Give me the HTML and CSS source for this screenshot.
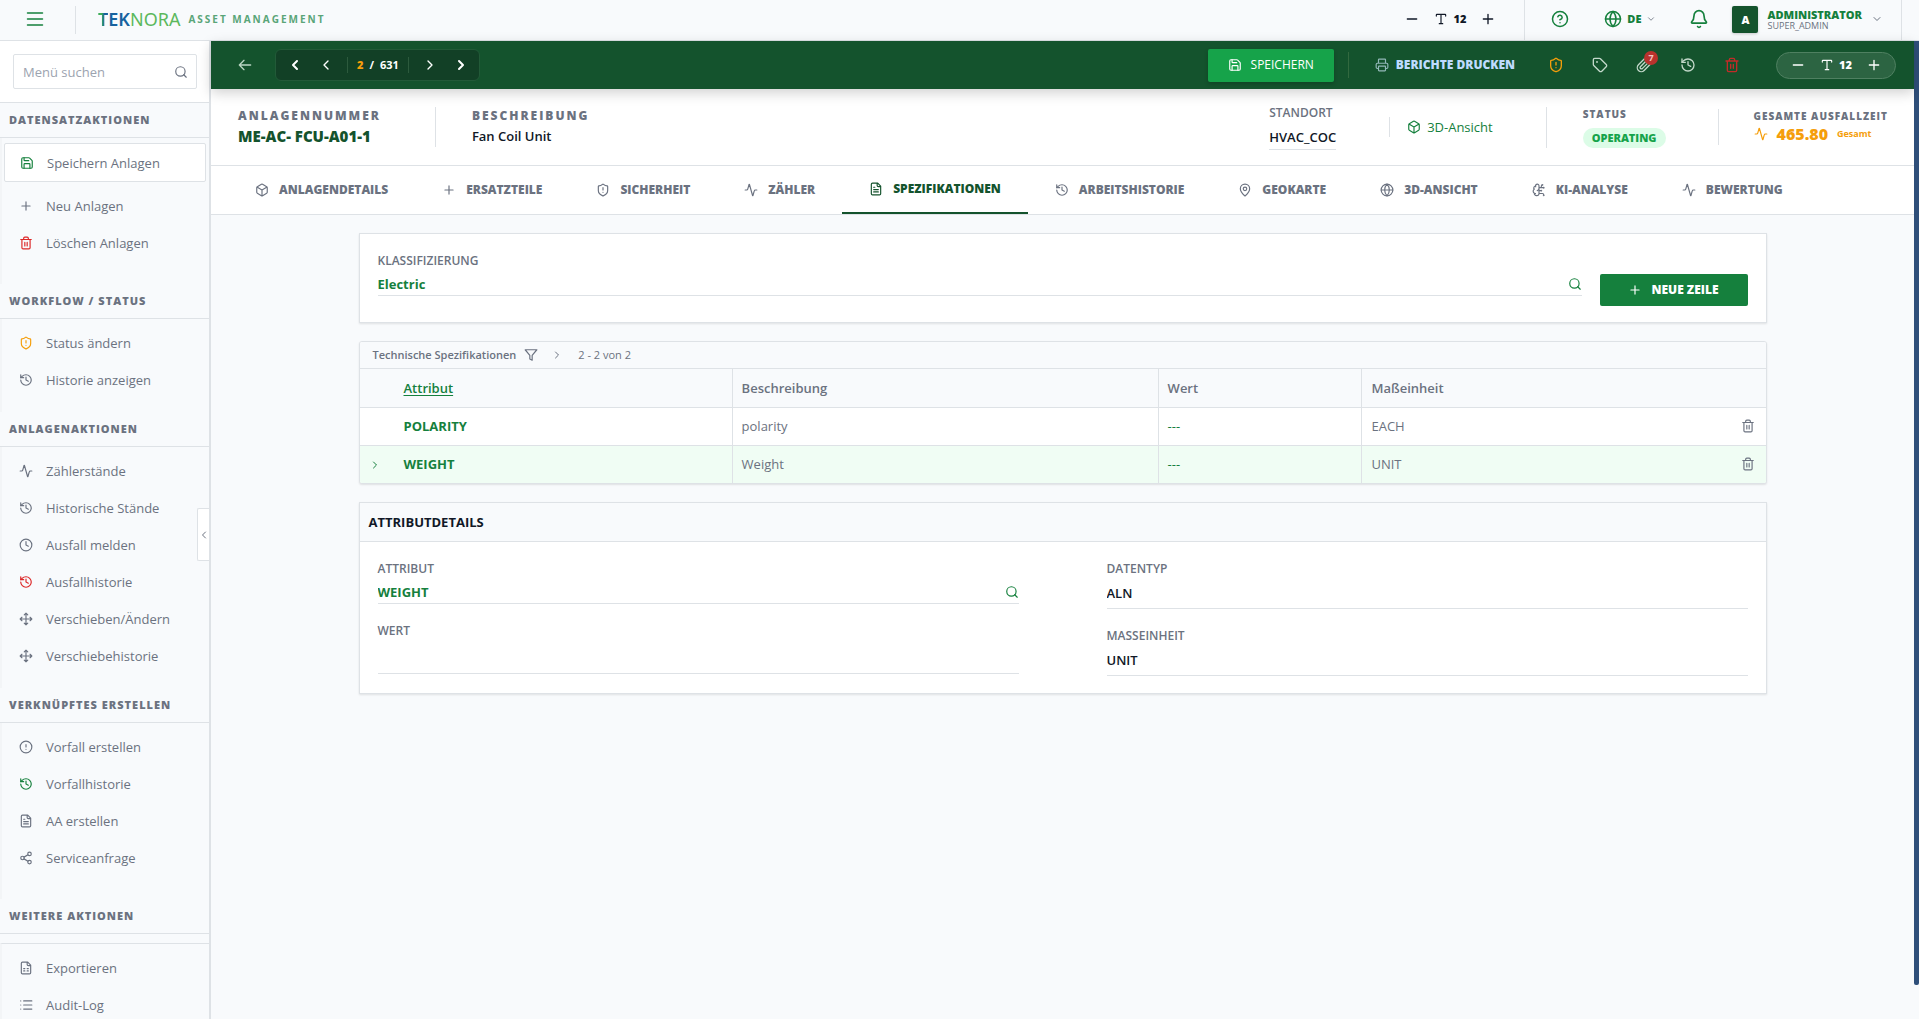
FILE: index.html
```html
<!DOCTYPE html>
<html lang="de">
<head>
<meta charset="utf-8">
<meta name="viewport" content="width=device-width, initial-scale=1">
<title>Teknora Asset Management</title>
<link rel="stylesheet" href="styles.css">
</head>
<body>
<svg class="sprite" aria-hidden="true">
  <symbol id="menu" viewBox="0 0 24 24"><path d="M2 4h20M2 12h20M2 20h20"/></symbol>
  <symbol id="minus" viewBox="0 0 24 24"><path d="M5 12h14"/></symbol>
  <symbol id="plus" viewBox="0 0 24 24"><path d="M5 12h14M12 5v14"/></symbol>
  <symbol id="type" viewBox="0 0 24 24"><path d="M12 4v16M4 7V5a1 1 0 0 1 1-1h14a1 1 0 0 1 1 1v2M9 20h6"/></symbol>
  <symbol id="help" viewBox="0 0 24 24"><circle cx="12" cy="12" r="10"/><path d="M9.1 9a3 3 0 0 1 5.8 1c0 2-3 3-3 3M12 17h.01"/></symbol>
  <symbol id="globe" viewBox="0 0 24 24"><circle cx="12" cy="12" r="10"/><path d="M12 2a14.5 14.5 0 0 0 0 20 14.5 14.5 0 0 0 0-20M2 12h20"/></symbol>
  <symbol id="bell" viewBox="0 0 24 24"><path d="M10.3 21a1.9 1.9 0 0 0 3.4 0M3.3 15.3A1 1 0 0 0 4 17h16a1 1 0 0 0 .7-1.7C19.4 14 18 12.500 18 8A6 6 0 0 0 6 8c0 4.500-1.400 6-2.700 7.300"/></symbol>
  <symbol id="down" viewBox="0 0 24 24"><path d="m6 9 6 6 6-6"/></symbol>
  <symbol id="left" viewBox="0 0 24 24"><path d="m15 18-6-6 6-6"/></symbol>
  <symbol id="right" viewBox="0 0 24 24"><path d="m9 18 6-6-6-6"/></symbol>
  <symbol id="back" viewBox="0 0 24 24"><path d="m12 19-7-7 7-7M22 12H5"/></symbol>
  <symbol id="search" viewBox="0 0 24 24"><circle cx="11" cy="11" r="8"/><path d="m21 21-4.300-4.300"/></symbol>
  <symbol id="save" viewBox="0 0 24 24"><path d="M15.200 3a2 2 0 0 1 1.400.6l3.800 3.800a2 2 0 0 1 .6 1.400V19a2 2 0 0 1-2 2H5a2 2 0 0 1-2-2V5a2 2 0 0 1 2-2z"/><path d="M17 21v-7a1 1 0 0 0-1-1H8a1 1 0 0 0-1 1v7M7 3v4a1 1 0 0 0 1 1h7"/></symbol>
  <symbol id="trash" viewBox="0 0 24 24"><path d="M3 6h18M19 6v14a2 2 0 0 1-2 2H7a2 2 0 0 1-2-2V6M8 6V4a2 2 0 0 1 2-2h4a2 2 0 0 1 2 2v2M10 11v6M14 11v6"/></symbol>
  <symbol id="shield" viewBox="0 0 24 24"><path d="M20 13c0 5-3.500 7.500-7.700 9a1 1 0 0 1-.6 0C7.500 20.500 4 18 4 13V6a1 1 0 0 1 1-1c2 0 4.500-1.200 6.200-2.700a1.200 1.200 0 0 1 1.600 0C14.500 3.800 17 5 19 5a1 1 0 0 1 1 1zM12 8v4M12 16h.01"/></symbol>
  <symbol id="history" viewBox="0 0 24 24"><path d="M3 12a9 9 0 1 0 9-9 9.800 9.800 0 0 0-6.700 2.700L3 8"/><path d="M3 3v5h5M12 7v5l4 2"/></symbol>
  <symbol id="activity" viewBox="0 0 24 24"><path d="M22 12h-2.500a2 2 0 0 0-1.900 1.500l-2.400 8.300a.25.25 0 0 1-.4 0L9.200 2.200a.25.25 0 0 0-.4 0l-2.400 8.300A2 2 0 0 1 4.500 12H2"/></symbol>
  <symbol id="clock" viewBox="0 0 24 24"><circle cx="12" cy="12" r="10"/><path d="M12 6v6l4 2"/></symbol>
  <symbol id="move" viewBox="0 0 24 24"><path d="M12 2v20M2 12h20M15 19l-3 3-3-3M19 9l3 3-3 3M5 9l-3 3 3 3M9 5l3-3 3 3"/></symbol>
  <symbol id="alert" viewBox="0 0 24 24"><circle cx="12" cy="12" r="10"/><path d="M12 8v4M12 16h.01"/></symbol>
  <symbol id="file" viewBox="0 0 24 24"><path d="M15 2H6a2 2 0 0 0-2 2v16a2 2 0 0 0 2 2h12a2 2 0 0 0 2-2V7zM14 2v4a2 2 0 0 0 2 2h4M10 9H8M16 13H8M16 17H8"/></symbol>
  <symbol id="sheet" viewBox="0 0 24 24"><path d="M15 2H6a2 2 0 0 0-2 2v16a2 2 0 0 0 2 2h12a2 2 0 0 0 2-2V7zM14 2v4a2 2 0 0 0 2 2h4M8 13h2M14 13h2M8 17h2M14 17h2"/></symbol>
  <symbol id="share" viewBox="0 0 24 24"><circle cx="18" cy="5" r="3"/><circle cx="6" cy="12" r="3"/><circle cx="18" cy="19" r="3"/><path d="m8.600 13.500 6.800 4M15.400 6.500l-6.800 4"/></symbol>
  <symbol id="list" viewBox="0 0 24 24"><path d="M3 5h.01M3 12h.01M3 19h.01M8 5h14M8 12h14M8 19h14"/></symbol>
  <symbol id="box" viewBox="0 0 24 24"><path d="M21 8a2 2 0 0 0-1-1.700l-7-4a2 2 0 0 0-2 0l-7 4A2 2 0 0 0 3 8v8a2 2 0 0 0 1 1.700l7 4a2 2 0 0 0 2 0l7-4a2 2 0 0 0 1-1.700ZM3.300 7l8.700 5 8.700-5M12 22V12"/></symbol>
  <symbol id="pin" viewBox="0 0 24 24"><path d="M20 10c0 5-5.500 10.200-7.400 11.800a1 1 0 0 1-1.200 0C9.500 20.200 4 15 4 10a8 8 0 0 1 16 0"/><circle cx="12" cy="10" r="3"/></symbol>
  <symbol id="brain" viewBox="0 0 24 24"><path d="M12 5a3 3 0 1 0-6 .1 4 4 0 0 0-2.500 5.800 4 4 0 0 0 .5 6.600A4 4 0 1 0 12 18ZM9 13a4.500 4.500 0 0 0 3-4M6 5.100a3 3 0 0 0 .4 1.400M3.500 10.900l.6-.4M6 18a4 4 0 0 1-2-.5M12 13h4M12 18h6a2 2 0 0 1 2 2v1M12 8h8M16 8V5a2 2 0 0 1 2-2"/><circle cx="16" cy="13" r=".5"/><circle cx="18" cy="3" r=".5"/><circle cx="20" cy="21" r=".5"/><circle cx="20" cy="8" r=".5"/></symbol>
  <symbol id="printer" viewBox="0 0 24 24"><path d="M6 18H4a2 2 0 0 1-2-2v-5a2 2 0 0 1 2-2h16a2 2 0 0 1 2 2v5a2 2 0 0 1-2 2h-2M6 9V3a1 1 0 0 1 1-1h10a1 1 0 0 1 1 1v6"/><rect x="6" y="14" width="12" height="8" rx="1"/></symbol>
  <symbol id="tag" viewBox="0 0 24 24"><path d="M12.600 2.600A2 2 0 0 0 11.200 2H4a2 2 0 0 0-2 2v7.200a2 2 0 0 0 .6 1.400l8.700 8.700a2.400 2.400 0 0 0 3.400 0l6.600-6.600a2.400 2.400 0 0 0 0-3.400z"/><circle cx="7.500" cy="7.500" r=".5"/></symbol>
  <symbol id="clip" viewBox="0 0 24 24"><path d="m21.400 11-9.200 9.200a6 6 0 0 1-8.500-8.500l8.600-8.600A4 4 0 1 1 18 8.800l-8.600 8.600a2 2 0 0 1-2.800-2.800l8.500-8.500"/></symbol>
  <symbol id="filter" viewBox="0 0 24 24"><path d="M22 3H2l8 9.500V19l4 2v-8.500z"/></symbol>
</svg>

<header class="topbar">
  <button class="icon-btn menu-btn" aria-label="Menü"><svg class="ic ic-18"><use href="#menu"/></svg></button>
  <div class="brand">
    <span class="logo" role="img" aria-label="Teknora"><span class="logo-a"><span class="logo-t">T</span>EK</span><span class="logo-b">NORA</span></span>
    <span class="brand-sub">ASSET MANAGEMENT</span>
  </div>
  <div class="font-size">
    <button class="icon-btn" aria-label="Kleiner"><svg class="ic ic-16"><use href="#minus"/></svg></button>
    <span class="size-val"><svg class="ic ic-14"><use href="#type"/></svg>12</span>
    <button class="icon-btn" aria-label="Größer"><svg class="ic ic-16"><use href="#plus"/></svg></button>
  </div>
  <div class="account">
    <button class="icon-btn help" aria-label="Hilfe"><svg class="ic ic-18"><use href="#help"/></svg></button>
    <button class="icon-btn lang"><svg class="ic ic-18"><use href="#globe"/></svg>DE<svg class="ic ic-10 muted"><use href="#down"/></svg></button>
    <button class="icon-btn bell" aria-label="Benachrichtigungen"><svg class="ic ic-20"><use href="#bell"/></svg></button>
    <button class="icon-btn user"><span class="avatar">A</span><span class="who"><b>ADMINISTRATOR</b><span>SUPER_ADMIN</span></span><svg class="ic ic-12 muted"><use href="#down"/></svg></button>
  </div>
</header>

<div class="shell">
  <aside class="sidebar">
    <div class="side-search"><label class="search-box"><input type="text" placeholder="Menü suchen" aria-label="Menü suchen"><svg class="ic ic-14"><use href="#search"/></svg></label></div>
    <nav class="side-nav">
      <h2>DATENSATZAKTIONEN</h2>
      <div class="group wide">
        <a href="#" class="item current"><svg class="ic ic-14 green"><use href="#save"/></svg>Speichern Anlagen</a>
        <a href="#" class="item"><svg class="ic ic-14"><use href="#plus"/></svg>Neu Anlagen</a>
        <a href="#" class="item"><svg class="ic ic-14 red"><use href="#trash"/></svg>Löschen Anlagen</a>
      </div>
      <h2>WORKFLOW / STATUS</h2>
      <div class="group">
        <a href="#" class="item"><svg class="ic ic-14 amber"><use href="#shield"/></svg>Status ändern</a>
        <a href="#" class="item"><svg class="ic ic-14"><use href="#history"/></svg>Historie anzeigen</a>
      </div>
      <h2>ANLAGENAKTIONEN</h2>
      <div class="group">
        <a href="#" class="item"><svg class="ic ic-14"><use href="#activity"/></svg>Zählerstände</a>
        <a href="#" class="item"><svg class="ic ic-14"><use href="#history"/></svg>Historische Stände</a>
        <a href="#" class="item"><svg class="ic ic-14"><use href="#clock"/></svg>Ausfall melden</a>
        <a href="#" class="item"><svg class="ic ic-14 red"><use href="#history"/></svg>Ausfallhistorie</a>
        <a href="#" class="item"><svg class="ic ic-14"><use href="#move"/></svg>Verschieben/Ändern</a>
        <a href="#" class="item"><svg class="ic ic-14"><use href="#move"/></svg>Verschiebehistorie</a>
      </div>
      <h2>VERKNÜPFTES ERSTELLEN</h2>
      <div class="group wide">
        <a href="#" class="item"><svg class="ic ic-14"><use href="#alert"/></svg>Vorfall erstellen</a>
        <a href="#" class="item"><svg class="ic ic-14 green"><use href="#history"/></svg>Vorfallhistorie</a>
        <a href="#" class="item"><svg class="ic ic-14"><use href="#file"/></svg>AA erstellen</a>
        <a href="#" class="item"><svg class="ic ic-14"><use href="#share"/></svg>Serviceanfrage</a>
      </div>
      <h2>WEITERE AKTIONEN</h2>
    </nav>
    <div class="side-foot group">
      <a href="#" class="item"><svg class="ic ic-14"><use href="#sheet"/></svg>Exportieren</a>
      <a href="#" class="item"><svg class="ic ic-14"><use href="#list"/></svg>Audit-Log</a>
    </div>
    <button class="collapse" aria-label="Seitenleiste einklappen"><svg class="ic ic-12"><use href="#left"/></svg></button>
  </aside>

  <main class="main">
    <div class="toolbar">
      <button class="icon-btn back" aria-label="Zurück"><svg class="ic ic-16"><use href="#back"/></svg></button>
      <div class="pager">
        <button class="icon-btn" aria-label="Erster"><svg class="ic ic-16 heavy"><use href="#left"/></svg></button>
        <button class="icon-btn" aria-label="Vorheriger"><svg class="ic ic-16"><use href="#left"/></svg></button>
        <span class="count"><b>2</b><span>/</span><span>631</span></span>
        <button class="icon-btn" aria-label="Nächster"><svg class="ic ic-16"><use href="#right"/></svg></button>
        <button class="icon-btn" aria-label="Letzter"><svg class="ic ic-16 heavy"><use href="#right"/></svg></button>
      </div>
      <div class="actions">
        <button class="save-btn"><svg class="ic ic-14"><use href="#save"/></svg>SPEICHERN</button>
        <span class="sep"></span>
        <button class="icon-btn print"><svg class="ic ic-14"><use href="#printer"/></svg>BERICHTE DRUCKEN</button>
        <div class="tools">
          <button class="icon-btn amber" aria-label="Status"><svg class="ic ic-16"><use href="#shield"/></svg></button>
          <button class="icon-btn" aria-label="Etikett"><svg class="ic ic-16"><use href="#tag"/></svg></button>
          <button class="icon-btn clip" aria-label="Anhänge"><svg class="ic ic-16"><use href="#clip"/></svg><span class="badge">7</span></button>
          <button class="icon-btn" aria-label="Historie"><svg class="ic ic-16"><use href="#history"/></svg></button>
          <button class="icon-btn danger" aria-label="Löschen"><svg class="ic ic-16"><use href="#trash"/></svg></button>
        </div>
        <div class="font-pill">
          <button class="icon-btn" aria-label="Kleiner"><svg class="ic ic-16"><use href="#minus"/></svg></button>
          <span class="size-val"><svg class="ic ic-14"><use href="#type"/></svg>12</span>
          <button class="icon-btn" aria-label="Größer"><svg class="ic ic-16"><use href="#plus"/></svg></button>
        </div>
      </div>
    </div>

    <section class="summary">
      <div class="fact"><span class="cap">ANLAGENNUMMER</span><strong class="asset">ME-AC- FCU-A01-1</strong></div>
      <div class="fact desc"><span class="cap">BESCHREIBUNG</span><strong>Fan Coil Unit</strong></div>
      <div class="fact place"><span class="label">STANDORT</span><strong>HVAC_COC</strong></div>
      <a href="#" class="view3d"><svg class="ic ic-14"><use href="#box"/></svg>3D-Ansicht</a>
      <div class="fact status"><span class="cap small">STATUS</span><span class="state">OPERATING</span></div>
      <div class="fact outage"><span class="cap small">GESAMTE AUSFALLZEIT</span><span class="hours"><svg class="ic ic-14"><use href="#activity"/></svg><b>465.80</b><small>Gesamt</small></span></div>
    </section>

    <nav class="tabs">
      <a href="#"><svg class="ic ic-14"><use href="#box"/></svg>ANLAGENDETAILS</a>
      <a href="#"><svg class="ic ic-14"><use href="#plus"/></svg>ERSATZTEILE</a>
      <a href="#"><svg class="ic ic-14"><use href="#shield"/></svg>SICHERHEIT</a>
      <a href="#"><svg class="ic ic-14"><use href="#activity"/></svg>ZÄHLER</a>
      <a href="#" class="active"><svg class="ic ic-14"><use href="#file"/></svg>SPEZIFIKATIONEN</a>
      <a href="#"><svg class="ic ic-14"><use href="#history"/></svg>ARBEITSHISTORIE</a>
      <a href="#"><svg class="ic ic-14"><use href="#pin"/></svg>GEOKARTE</a>
      <a href="#"><svg class="ic ic-14"><use href="#globe"/></svg>3D-ANSICHT</a>
      <a href="#"><svg class="ic ic-14"><use href="#brain"/></svg>KI-ANALYSE</a>
      <a href="#"><svg class="ic ic-14"><use href="#activity"/></svg>BEWERTUNG</a>
    </nav>

    <div class="content">
      <section class="card classify">
        <div class="field">
          <label for="klass">KLASSIFIZIERUNG</label>
          <div class="lookup"><input id="klass" type="text" value="Electric"><svg class="ic ic-14"><use href="#search"/></svg></div>
        </div>
        <button class="new-row"><svg class="ic ic-14"><use href="#plus"/></svg>NEUE ZEILE</button>
      </section>

      <section class="card specs">
        <div class="specs-head"><h3>Technische Spezifikationen</h3><svg class="ic ic-14"><use href="#filter"/></svg><svg class="ic ic-12"><use href="#right"/></svg><span>2 - 2 von 2</span></div>
        <table>
          <colgroup><col class="c-attr"><col class="c-desc"><col class="c-val"><col></colgroup>
          <thead><tr><th class="attr"><a href="#">Attribut</a></th><th>Beschreibung</th><th>Wert</th><th>Maßeinheit</th></tr></thead>
          <tbody>
            <tr><td class="attr">POLARITY</td><td>polarity</td><td class="dash">---</td><td><div class="unit">EACH<button class="icon-btn" aria-label="Löschen"><svg class="ic ic-14"><use href="#trash"/></svg></button></div></td></tr>
            <tr class="selected"><td class="attr"><svg class="ic ic-12 mark"><use href="#right"/></svg>WEIGHT</td><td>Weight</td><td class="dash">---</td><td><div class="unit">UNIT<button class="icon-btn" aria-label="Löschen"><svg class="ic ic-14"><use href="#trash"/></svg></button></div></td></tr>
          </tbody>
        </table>
      </section>

      <section class="card details">
        <h3>ATTRIBUTDETAILS</h3>
        <div class="details-grid">
          <div class="column">
            <div class="field"><label for="attribut">ATTRIBUT</label><div class="lookup"><input id="attribut" type="text" value="WEIGHT"><svg class="ic ic-14"><use href="#search"/></svg></div></div>
            <div class="field value-field"><label for="wert">WERT</label><input id="wert" type="text"></div>
          </div>
          <div class="column">
            <div class="field plain"><label for="datentyp">DATENTYP</label><input id="datentyp" type="text" value="ALN" readonly></div>
            <div class="field plain"><label for="einheit">MASSEINHEIT</label><input id="einheit" type="text" value="UNIT" readonly></div>
          </div>
        </div>
      </section>
    </div>
  </main>
  <div class="rail"></div>
</div>
</body>
</html>
```
FILE: styles.css
```css
* { box-sizing: border-box; }
:root {
  --ink: #111827;
  --gray: #6b7280;
  --line: #dee2e6;
  --panel: #f8fafc;
  --deep: #14532d;
  --green: #15803d;
}
body { margin: 0; height: 100vh; display: flex; flex-direction: column; overflow: hidden; background: var(--panel); color: var(--ink); font: 13px/18px "Open Sans", "Noto Sans", sans-serif; }
button, input { font: inherit; color: inherit; }
button { cursor: pointer; }
a { color: inherit; text-decoration: none; }
h2, h3 { margin: 0; }
.sprite { display: none; }
.ic { flex: none; display: block; fill: none; stroke: currentColor; stroke-width: 2; stroke-linecap: round; stroke-linejoin: round; width: 14px; height: 14px; }
.ic-10 { width: 10px; height: 10px; }
.ic-12 { width: 12px; height: 12px; }
.ic-16 { width: 16px; height: 16px; }
.ic-18 { width: 18px; height: 18px; }
.ic-20 { width: 20px; height: 20px; }
.heavy { stroke-width: 3; }
.green { color: var(--green); }
.red { color: #dc2626; }
.amber { color: #f59e0b; }
.muted { color: var(--gray); }
.icon-btn { display: flex; align-items: center; justify-content: center; padding: 0; border: 0; background: none; }

/* Top bar */
.topbar { flex: none; display: flex; align-items: center; height: 41px; padding-right: 17px; border-bottom: 1px solid var(--line); }
.topbar > * { padding-bottom: 2px; }
.menu-btn { width: 76px; height: 28px; padding-right: 6px; border-right: 1px solid var(--line); color: var(--green); }
.brand { display: flex; align-items: center; gap: 8px; margin-left: 22px; }
.logo { font: 18px/18px "Noto Sans", sans-serif; }
.logo-a { color: #17629f; font-weight: 600; }
.logo-t { background: linear-gradient(90deg, #3fae5a 35%, #17629f 65%); background-clip: text; color: transparent; }
.logo-b { color: #5cb85c; }
.brand-sub { color: #5aa578; font-size: 10px; font-weight: 700; letter-spacing: 2px; }
.font-size { display: flex; align-items: center; gap: 14px; margin-left: auto; padding-right: 28px; }
.size-val { display: flex; align-items: center; gap: 5px; font-size: 11px; font-weight: 800; }
.account { display: flex; align-items: center; align-self: stretch; padding: 0 18px 2px 26px; border: solid var(--line); border-width: 0 1px; color: var(--green); }
.lang { gap: 5px; margin-left: 35px; font-size: 11px; font-weight: 800; }
.bell { margin-left: 33px; }
.user { gap: 9px; margin-left: 23px; }
.avatar { width: 26px; height: 27px; border-radius: 2px; background: var(--deep); color: #fff; font-size: 11px; font-weight: 800; line-height: 27px; box-shadow: 0 1px 3px #0003; }
.who { display: flex; flex-direction: column; text-align: left; font-size: 9px; line-height: 9px; color: var(--gray); }
.who b { font-size: 11px; line-height: 12px; font-weight: 800; color: var(--green); }

.shell { flex: 1; min-height: 0; display: flex; }

/* Sidebar */
.sidebar { position: relative; flex: none; width: 211px; border-right: 2px solid var(--line); overflow: hidden; }
.side-search { padding: 13px 12px 13px 13px; border-bottom: 1px solid var(--line); background: #fff; }
.search-box { display: flex; align-items: center; height: 35px; padding: 0 8px 0 9px; border: 1px solid var(--line); border-radius: 2px; color: var(--gray); }
.search-box input { flex: 1; min-width: 0; padding: 0; border: 0; outline: 0; background: none; }
.search-box input::placeholder { color: #9ca3af; }
.side-nav { padding-bottom: 9px; }
.side-nav h2 { height: 35px; padding-left: 9px; border-bottom: 1px solid var(--line); color: var(--gray); font-size: 11px; font-weight: 800; line-height: 34px; letter-spacing: 1px; white-space: nowrap; }
.group { padding: 5px 3px 14px 2px; border-left: 2px solid #f3f5f7; }
.wide { padding-bottom: 23px; }
.item { display: flex; align-items: center; gap: 13px; height: 37px; padding-left: 15px; color: var(--gray); font-weight: 500; }
.current { height: 39px; margin-bottom: 5px; border: 1px solid var(--line); border-radius: 2px; background: #fff; }
.side-foot { border-top: 1px solid var(--line); }
.collapse { position: absolute; right: 0; top: 467px; width: 12px; height: 53px; padding: 0; border: 1px solid var(--line); border-right: 0; border-radius: 2px 0 0 2px; background: #fff; color: var(--gray); }

/* Record toolbar */
.main { flex: 1; min-width: 0; }
.rail { flex: none; width: 5px; margin-bottom: 34px; border-radius: 0 0 2px 2px; background: #2f4f7a; }
.toolbar { position: relative; display: flex; align-items: center; height: 48px; padding: 0 18px 0 24px; background: var(--deep); color: #fff; box-shadow: 0 4px 12px #0000002e; }
.back { color: #b9d6c3; width: 18px; }
.pager { display: flex; align-items: center; height: 32px; margin-left: 22px; border: 1px solid #225a38; border-radius: 6px; background: #124026; }
.pager .icon-btn { width: 31px; }
.pager .icon-btn:first-child { margin-left: 3px; }
.pager .icon-btn:last-child { margin-right: 2px; }
.count { display: flex; gap: 6px; margin: 0 6px; padding: 0 9px; border: solid #2c5a3d; border-width: 0 1px; font-size: 11px; font-weight: 700; line-height: 16px; }
.count b { color: #f59e0b; }
.actions { display: flex; align-items: center; margin-left: auto; }
.save-btn { display: flex; align-items: center; justify-content: center; gap: 9px; width: 126px; height: 33px; padding: 0; border: 0; border-radius: 2px; background: #16a34a; color: #fff; font-size: 12px; box-shadow: 0 2px 4px #0003; }
.sep { width: 1px; height: 26px; margin: 0 26px 0 14px; background: #32693f; }
.print { gap: 7px; color: #bfdbfe; font-size: 12px; font-weight: 800; }
.print .ic { color: #93b8b8; }
.tools { display: flex; gap: 28px; margin: 0 36px 0 33px; color: #c3d8ca; }
.tools .danger { color: #c32b28; }
.clip { position: relative; }
.badge { position: absolute; top: -6px; right: -6px; width: 14px; height: 14px; border-radius: 50%; background: #b9322d; color: #f3c4c1; font-size: 9px; font-weight: 700; line-height: 14px; }
.font-pill { display: flex; align-items: center; gap: 14px; height: 27px; padding: 0 13px; border: 1px solid #4f8061; border-radius: 14px; background: #2c6442; }

/* Asset summary */
.summary { display: flex; align-items: center; height: 77px; padding: 0 26px 0 27px; border-bottom: 1px solid var(--line); background: #fff; }
.fact { display: flex; flex-direction: column; }
.fact strong { font-size: 13px; font-weight: 600; line-height: 22px; }
.fact .asset { color: var(--deep); font-size: 15px; font-weight: 800; }
.cap { color: var(--gray); font-size: 12px; font-weight: 800; letter-spacing: 2px; }
.small { font-size: 10px; letter-spacing: 1px; line-height: 14px; }
.label { color: var(--gray); font-size: 12px; font-weight: 600; }
.desc { margin-left: 54px; padding-left: 36px; border-left: 1px solid var(--line); }
.place { margin-left: auto; gap: 4px; }
.place strong { height: 24px; border-bottom: 1px solid var(--line); }
.view3d { display: flex; align-items: center; gap: 6px; margin: 0 53px; padding-left: 17px; border-left: 1px solid var(--line); color: var(--green); line-height: 20px; }
.status { gap: 7px; padding: 0 52px 0 36px; border-left: 1px solid var(--line); }
.state { padding: 0 9px; border-radius: 10px; background: #dcfce7; color: #16a34a; font-size: 11px; font-weight: 800; line-height: 20px; }
.outage { padding-left: 35px; border-left: 1px solid var(--line); }
.hours { display: flex; align-items: center; gap: 9px; color: #f59e0b; line-height: 22px; }
.hours b { font-size: 16px; font-weight: 800; }
.hours small { font-size: 9px; font-weight: 700; }

.tabs { display: flex; height: 49px; padding-left: 17px; border-bottom: 1px solid var(--line); background: #fff; color: var(--gray); font-size: 12px; font-weight: 800; white-space: nowrap; }
.tabs a { display: flex; align-items: center; gap: 10px; padding: 0 27px; }
.tabs .active { border-bottom: 2px solid var(--deep); color: var(--deep); }

/* Content */
.content { display: flex; flex-direction: column; gap: 18px; max-width: 1444px; margin: 0 auto; padding: 18px; }
.card { border: 1px solid var(--line); background: #fff; box-shadow: 0 1px 2px #0000001a; }
.field { display: flex; flex-direction: column; min-width: 0; }
.field label { color: var(--gray); font-size: 12px; font-weight: 600; }
.field input { width: 100%; min-width: 0; padding: 0; border: 0; outline: 0; background: none; font-weight: 600; }
.lookup { display: flex; align-items: center; height: 25px; margin-top: 1px; padding-top: 2px; border-bottom: 1px solid var(--line); color: var(--green); }
.field .lookup input { font-weight: 700; }
.classify { display: flex; align-items: flex-start; gap: 18px; height: 90px; padding: 18px; }
.classify .field { flex: 1; }
.new-row { display: flex; align-items: center; justify-content: center; gap: 9px; width: 148px; height: 32px; margin-top: 22px; padding: 0; border: 0; border-radius: 2px; background: var(--green); color: #fff; font-size: 12px; font-weight: 800; }
.specs { overflow: hidden; border-radius: 3px; }
.specs-head { display: flex; align-items: center; height: 27px; padding-left: 13px; border-bottom: 1px solid var(--line); background: var(--panel); color: var(--gray); font-size: 11px; }
.specs-head h3 { font-size: 11px; font-weight: 600; margin-right: 8px; }
.specs-head .ic-12 { margin: 0 15px 0 13px; }
table { width: 100%; border-collapse: collapse; table-layout: fixed; color: var(--gray); text-align: left; }
.c-attr { width: 26.500%; }
.c-desc { width: 30.300%; }
.c-val { width: 14.500%; }
th, td { position: relative; height: 38px; padding: 0 9px; }
th + th, td + td { border-left: 1px solid var(--line); }
tr + tr, tbody tr { border-top: 1px solid var(--line); }
thead { background: var(--panel); }
th { font-weight: 600; }
.attr { padding-left: 44px; color: var(--green); }
td.attr { font-weight: 700; }
.attr a { text-decoration: underline; text-underline-offset: 2px; }
.dash { color: var(--green); }
.selected { background: #f0fdf4; }
.mark { position: absolute; left: 9px; top: 13px; }
.unit { display: flex; justify-content: space-between; align-items: center; padding-right: 2px; }
.details h3 { height: 39px; padding-left: 9px; border-bottom: 1px solid var(--line); background: var(--panel); font-size: 13px; font-weight: 700; line-height: 38px; }
.details-grid { display: grid; grid-template-columns: 1fr 1fr; gap: 88px; padding: 18px 18px 17px; }
.column { display: flex; flex-direction: column; gap: 18px; }
.value-field input { height: 34px; border-bottom: 1px solid var(--line); }
.plain input { height: 31px; border-bottom: 1px solid var(--line); }
```
